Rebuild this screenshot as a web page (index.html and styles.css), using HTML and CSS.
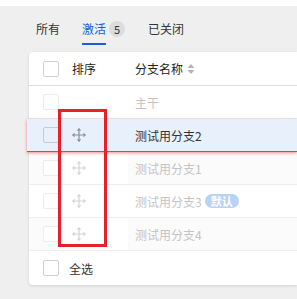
FILE: index.html
```html
<!DOCTYPE html>
<html>
<head>
    <title>分支排序</title>
    <link rel="stylesheet" href="styles.css">
</head>
<body>
    <div class="panel">
        <div class="tabs">
            <span class="tab">所有</span>
            <span class="tab active">激活</span>
            <span class="count">5</span>
            <span class="tab">已关闭</span>
        </div>

        <div class="card">
            <div class="row head">
                <div class="cell check"><span class="box"></span></div>
                <div class="cell sort">排序</div>
                <div class="cell name">分支名称
                    <svg class="sorter" width="8" height="12" viewBox="0 0 8 12">
                        <path d="M4 1 L7.5 5 L0.5 5 Z" fill="#b4b4b4"/>
                        <path d="M4 11 L7.5 7 L0.5 7 Z" fill="#b4b4b4"/>
                    </svg>
                </div>
            </div>

            <div class="row disabled">
                <div class="cell check"><span class="box"></span></div>
                <div class="cell sort"></div>
                <div class="cell name">主干</div>
            </div>

            <div class="row dragging">
                <div class="cell check"><span class="box"></span></div>
                <div class="cell sort"><svg class="move" viewBox="0 0 14 14"><use href="#move"/></svg></div>
                <div class="cell name">测试用分支2</div>
            </div>

            <div class="row disabled shade">
                <div class="cell check"><span class="box"></span></div>
                <div class="cell sort"><svg class="move" viewBox="0 0 14 14"><use href="#move"/></svg></div>
                <div class="cell name">测试用分支1</div>
            </div>

            <div class="row disabled">
                <div class="cell check"><span class="box"></span></div>
                <div class="cell sort"><svg class="move" viewBox="0 0 14 14"><use href="#move"/></svg></div>
                <div class="cell name">测试用分支3<span class="tag">默认</span></div>
            </div>

            <div class="row disabled shade">
                <div class="cell check"><span class="box"></span></div>
                <div class="cell sort"><svg class="move" viewBox="0 0 14 14"><use href="#move"/></svg></div>
                <div class="cell name">测试用分支4</div>
            </div>

            <div class="row foot">
                <div class="cell check"><span class="box"></span></div>
                <div class="cell all">全选</div>
            </div>

            <div class="mark"></div>
        </div>
    </div>

    <svg width="0" height="0" style="position:absolute">
        <defs>
            <g id="move" fill="none" stroke="currentColor" stroke-width="1.2" stroke-linecap="round" stroke-linejoin="round">
                <path d="M7 1 V13 M1 7 H13"/>
                <path d="M5.8 2.3 L7 1 L8.2 2.3"/>
                <path d="M5.8 11.7 L7 13 L8.2 11.7"/>
                <path d="M2.3 5.8 L1 7 L2.3 8.2"/>
                <path d="M11.7 5.8 L13 7 L11.7 8.2"/>
            </g>
        </defs>
    </svg>
</body>
</html>
```

FILE: styles.css
```css
body {
    margin: 0;
    background-color: #fff;
    font-family: "Noto Sans CJK SC", "Noto Sans", sans-serif;
    font-size: 12px;
    color: #333;
    overflow: hidden;
}

.panel {
    margin-top: 6px;
    background-color: #efefef;
    height: 293px;
    padding-left: 29px;
}

/* Tabs */
.tabs {
    display: flex;
    align-items: center;
    height: 46px;
    padding-left: 7px;
}

.tab {
    position: relative;
    line-height: 18px;
    margin-right: 22px;
}

.tab.active {
    color: #1a5fd8;
    margin-right: 3px;
}

.tab.active::after {
    content: "";
    position: absolute;
    left: 0;
    right: 0;
    bottom: -7px;
    height: 2px;
    background-color: #1a5fd8;
}

.count {
    width: 16px;
    height: 16px;
    line-height: 16px;
    border-radius: 50%;
    background-color: #dcdcdc;
    text-align: center;
    font-size: 11px;
    margin-right: 23px;
}

/* Card */
.card {
    position: relative;
    background-color: #fff;
    border-radius: 4px 0 0 4px;
    box-shadow: 0 1px 3px rgba(0, 0, 0, 0.12);
}

.row {
    display: flex;
    align-items: center;
    height: 33px;
    border-bottom: 1px solid #eeeeee;
    box-sizing: border-box;
}

.row.head {
    height: 34px;
    color: #222;
    border-bottom-color: #dddddd;
}

.row.foot {
    height: 34px;
    border-bottom: none;
}

.cell {
    padding-left: 7px;
    box-sizing: border-box;
}

.check {
    width: 36px;
    padding-left: 14px;
}

.sort {
    width: 63px;
}

.name {
    display: flex;
    align-items: center;
}

.all {
    padding-left: 4px;
}

.box {
    display: block;
    width: 16px;
    height: 16px;
    box-sizing: border-box;
    border: 1px solid #d0d0d0;
    border-radius: 2px;
    background-color: #fff;
}

.sorter {
    margin-left: 4px;
}

.move {
    display: block;
    width: 14px;
    height: 14px;
    color: #d4d4d4;
}

.disabled {
    color: #c4c4c4;
}

.disabled .box {
    border-color: #ececec;
}

.shade {
    background-color: #fbfbfb;
}

.shade .sort {
    background-color: #fff;
    align-self: stretch;
    display: flex;
    align-items: center;
}

.dragging {
    margin-left: -2px;
    padding-left: 2px;
    background-color: #e8f0fb;
    border-bottom: 1px solid #f03c3c;
    box-shadow: 0 1px 3px rgba(240, 40, 40, 0.55);
    position: relative;
}

.dragging .box {
    border-color: #c6cbd3;
    background-color: transparent;
}

.dragging .move {
    color: #8a8f96;
}

.tag {
    margin-left: 3px;
    padding: 0 6px;
    line-height: 14px;
    border-radius: 7px;
    background-color: #b9d3f6;
    color: #fff;
    font-size: 11px;
    font-weight: bold;
}

/* annotation */
.mark {
    position: absolute;
    left: 29px;
    top: 57px;
    width: 43px;
    height: 132px;
    border: 3px solid #e8202a;
}
```
